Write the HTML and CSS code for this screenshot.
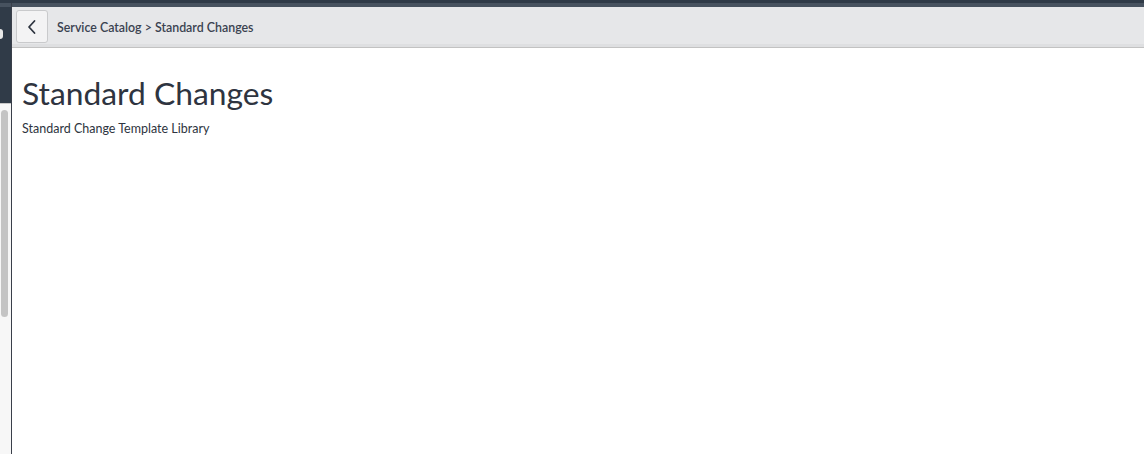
FILE: index.html
```html
<!DOCTYPE html>
<html>
<head>
<meta charset="utf-8">
<link rel="stylesheet" href="styles.css">
</head>
<body>
<div class="topbar"></div>
<div class="main">
  <aside class="side">
    <div class="side-dark"><span class="side-icon"></span></div>
    <div class="side-scroll"><div class="thumb"></div></div>
  </aside>
  <div class="divider"></div>
  <section class="content">
    <header class="crumbbar">
      <button class="back" aria-label="Back">
        <svg width="12" height="16" viewBox="0 0 12 16"><path d="M8.5 2 L3 8 L8.5 14" fill="none" stroke="#2e3440" stroke-width="1.8" stroke-linecap="round" stroke-linejoin="round"/></svg>
      </button>
      <span class="crumbs">Service Catalog &gt; Standard Changes</span>
    </header>
    <div class="page">
      <h1 class="title">Standard Changes</h1>
      <p class="subtitle">Standard Change Template Library</p>
    </div>
  </section>
</div>
</body>
</html>
```
FILE: styles.css
```css
html, body { margin: 0; padding: 0; background: #fff; }
body { width: 1144px; height: 454px; overflow: hidden; font-family: Lato, "Liberation Sans", sans-serif; color: #2e3440; }
.topbar { height: 3px; background: #2f3a47; }
.main { display: flex; height: 451px; }
.side { width: 11px; display: flex; flex-direction: column; background: #f7f7f7; }
.side-dark { height: 96px; background: #303b48; border-top: 4px solid #47525f; border-bottom: 1px solid #c8c8c8; position: relative; }
.side-icon { position: absolute; left: -4px; top: 22px; width: 7px; height: 10px; border-radius: 3px; background: #e8e8e8; }
.side-scroll { flex: 1; padding: 6px 3px 0 1px; }
.thumb { height: 207px; border-radius: 4px; background: #c4c4c4; }
.divider { width: 1px; background: #3a3f4a; }
.content { flex: 1; display: flex; flex-direction: column; }
.crumbbar { height: 40px; background: #e6e7e9; border-top: 4px solid #47525f; border-bottom: 1px solid #c2c2c2; box-shadow: inset 0 -3px 0 #dedfe1; display: flex; align-items: center; padding: 0 0 0 4px; box-sizing: content-box; flex: none; }
.back { width: 32px; height: 33px; margin-top: -1px; border: 1px solid #c9cacc; border-radius: 3px; background: #f3f3f4; display: flex; align-items: center; justify-content: center; padding: 0; }
.crumbs { margin-left: 9px; font-size: 12.4px; font-weight: 600; color: #3a4250; }
.page { padding: 0 10px; }
.title { margin: 26px 0 0; font-size: 31.8px; font-weight: 400; color: #2e3440; line-height: 38px; }
.subtitle { margin: 9px 0 0; font-size: 12.5px; color: #2e3440; }
```
